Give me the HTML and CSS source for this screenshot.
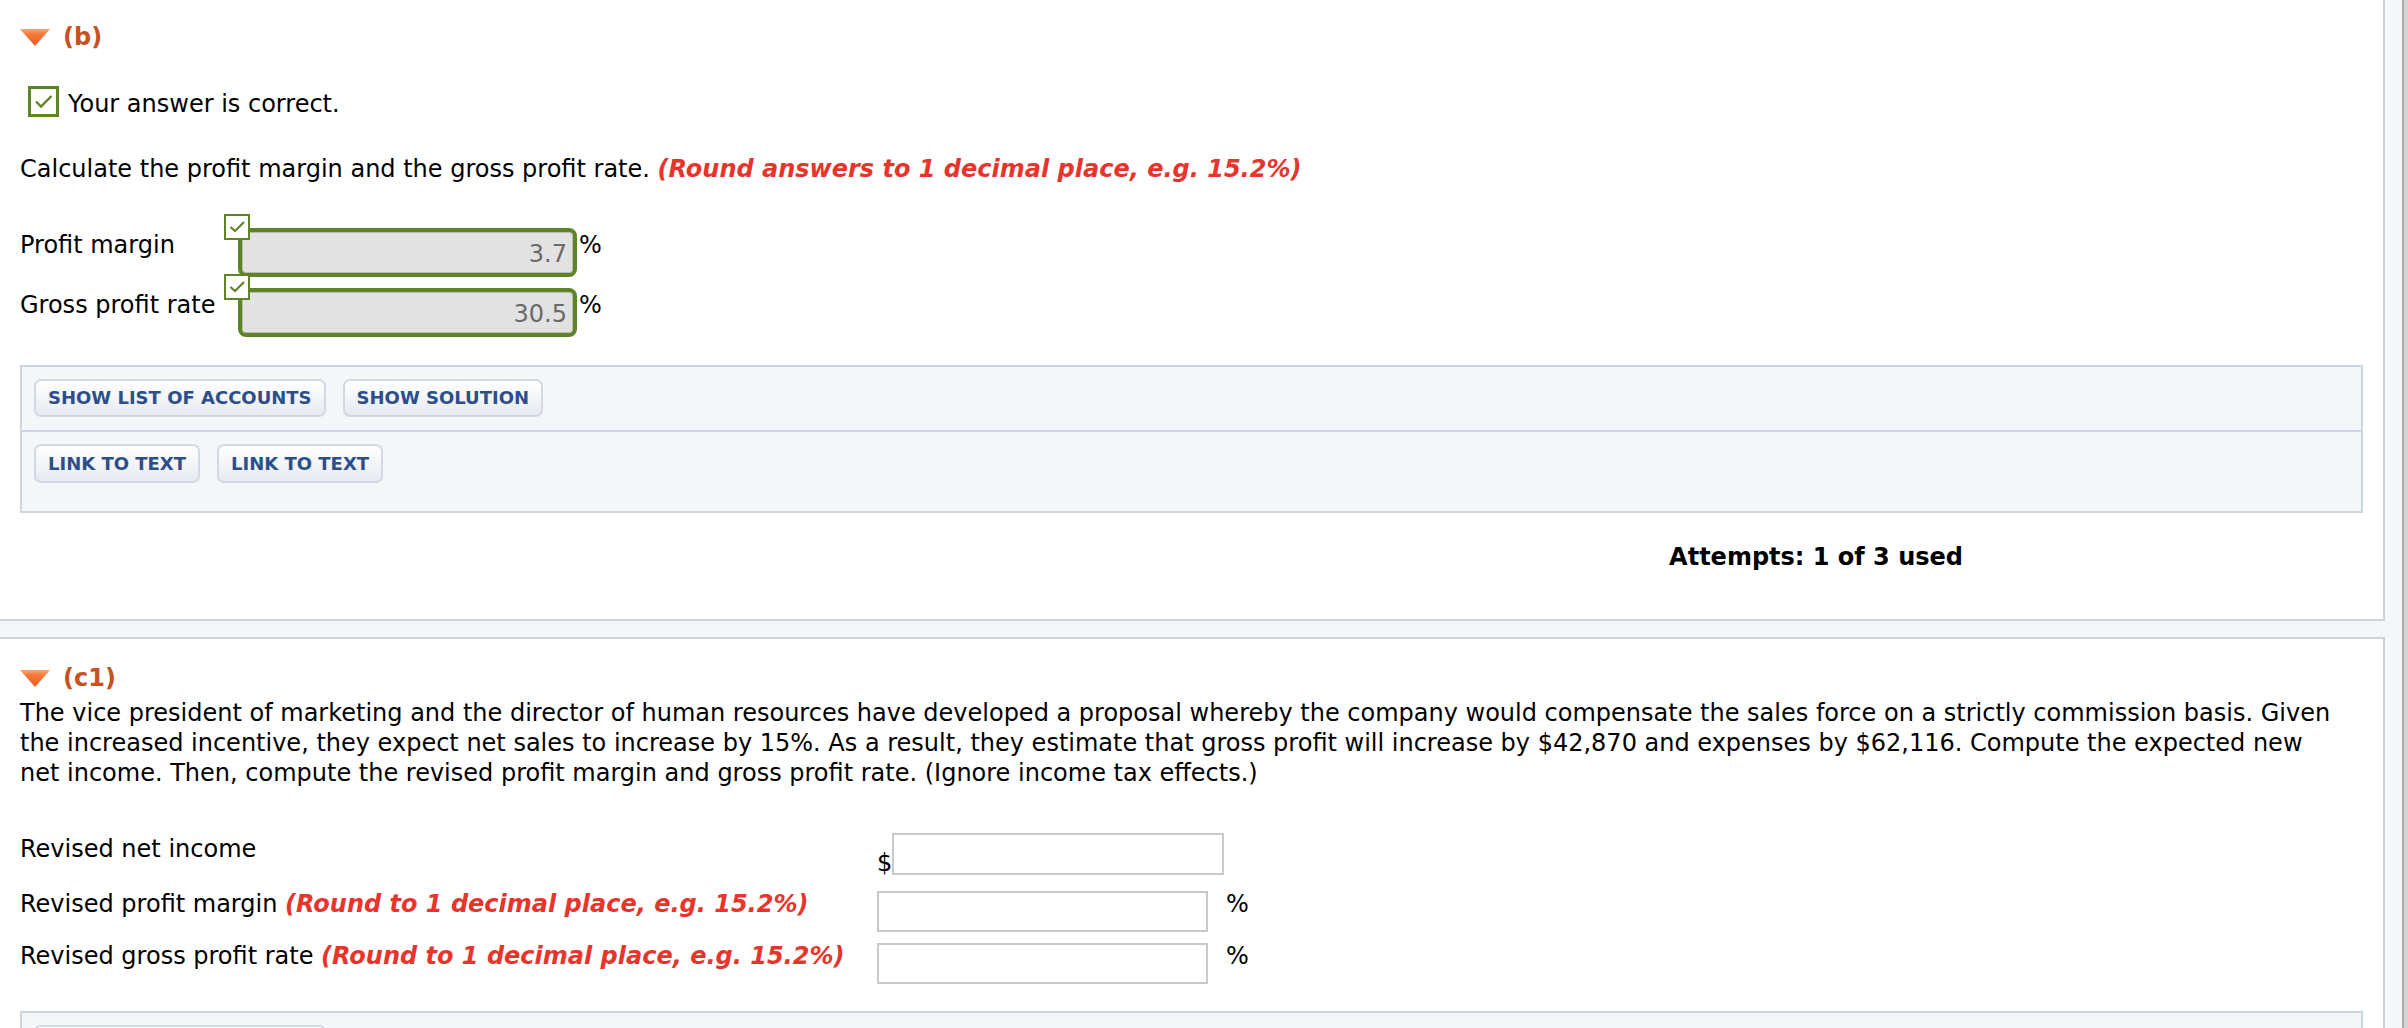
FILE: index.html
```html
<!DOCTYPE html>
<html lang="en">
<head>
<meta charset="utf-8">
<title>Question parts</title>
<link rel="stylesheet" href="styles.css">
</head>
<body>
<div class="page">
  <div class="content">
    <section class="part part-b">
      <h2 class="part-title">
        <svg class="caret" viewBox="0 0 30 17" width="30" height="17"><defs><linearGradient id="cg1" x1="0" y1="0" x2="0" y2="1"><stop offset="0" stop-color="#f9a872"/><stop offset="0.3" stop-color="#f47a3a"/><stop offset="1" stop-color="#f05a1e"/></linearGradient></defs><polygon points="0,0 30,0 15,17" fill="url(#cg1)"/></svg>
        <span>(b)</span>
      </h2>
      <div class="feedback">
        <span class="check-lg"><svg viewBox="0 0 25 25" width="25" height="25"><polyline points="5,12.5 10,17.5 20.5,7" fill="none" stroke="#5e8425" stroke-width="2.3"/></svg></span>
        <span class="feedback-text">Your answer is correct.</span>
      </div>
      <p class="prompt">Calculate the profit margin and the gross profit rate. <em class="hint">(Round answers to 1 decimal place, e.g. 15.2%)</em></p>
      <div class="answers">
        <div class="answer-row">
          <span class="answer-label">Profit margin</span>
          <span class="answer-field">
            <span class="check-sm"><svg viewBox="0 0 21 21" width="21" height="21"><polyline points="3.5,10 8,14 17,5" fill="none" stroke="#5e8425" stroke-width="2.1"/></svg></span>
            <span class="answer-value">3.7</span>
          </span>
          <span class="unit">%</span>
        </div>
        <div class="answer-row">
          <span class="answer-label">Gross profit rate</span>
          <span class="answer-field">
            <span class="check-sm"><svg viewBox="0 0 21 21" width="21" height="21"><polyline points="3.5,10 8,14 17,5" fill="none" stroke="#5e8425" stroke-width="2.1"/></svg></span>
            <span class="answer-value">30.5</span>
          </span>
          <span class="unit">%</span>
        </div>
      </div>
      <div class="tools">
        <div class="tools-row">
          <button class="tool-btn" type="button">SHOW LIST OF ACCOUNTS</button>
          <button class="tool-btn" type="button">SHOW SOLUTION</button>
        </div>
        <div class="tools-row tools-row-last">
          <button class="tool-btn" type="button">LINK TO TEXT</button>
          <button class="tool-btn" type="button">LINK TO TEXT</button>
        </div>
      </div>
      <div class="attempts">Attempts: 1 of 3 used</div>
    </section>

    <section class="part part-c">
      <h2 class="part-title">
        <svg class="caret" viewBox="0 0 30 17" width="30" height="17"><defs><linearGradient id="cg2" x1="0" y1="0" x2="0" y2="1"><stop offset="0" stop-color="#f9a872"/><stop offset="0.3" stop-color="#f47a3a"/><stop offset="1" stop-color="#f05a1e"/></linearGradient></defs><polygon points="0,0 30,0 15,17" fill="url(#cg2)"/></svg>
        <span>(c1)</span>
      </h2>
      <p class="question">The vice president of marketing and the director of human resources have developed a proposal whereby the company would compensate the sales force on a strictly commission basis. Given<br>the increased incentive, they expect net sales to increase by 15%. As a result, they estimate that gross profit will increase by $42,870 and expenses by $62,116. Compute the expected new<br>net income. Then, compute the revised profit margin and gross profit rate. (Ignore income tax effects.)</p>
      <div class="calc">
        <div class="calc-row calc-row-first">
          <span class="calc-label">Revised net income</span>
          <span class="currency">$</span>
          <input class="calc-input calc-input-money" type="text" aria-label="Revised net income">
        </div>
        <div class="calc-row calc-row-second">
          <span class="calc-label">Revised profit margin <em class="hint">(Round to 1 decimal place, e.g. 15.2%)</em></span>
          <input class="calc-input" type="text" aria-label="Revised profit margin">
          <span class="calc-unit">%</span>
        </div>
        <div class="calc-row calc-row-third">
          <span class="calc-label">Revised gross profit rate <em class="hint">(Round to 1 decimal place, e.g. 15.2%)</em></span>
          <input class="calc-input" type="text" aria-label="Revised gross profit rate">
          <span class="calc-unit">%</span>
        </div>
      </div>
      <div class="tools tools-c">
        <div class="tools-row tools-row-peek">
          <button class="tool-btn tool-btn-peek" type="button" aria-label="Show list of accounts"></button>
        </div>
      </div>
    </section>
  </div>
  <div class="scrolltrack"></div>
</div>
</body>
</html>
```

FILE: styles.css
```css
html, body {
  margin: 0;
  padding: 0;
  height: 1028px;
  overflow: hidden;
}

body {
  background: #f4f7fa;
  font-family: "DejaVu Sans", Verdana, sans-serif;
  font-size: 24px;
  line-height: 30px;
  color: #000;
}

.page {
  display: flex;
  height: 1028px;
  overflow: hidden;
}

.content {
  flex: 1;
  min-width: 0;
  height: 1028px;
  overflow: hidden;
}

.scrolltrack {
  width: 4px;
  flex: 0 0 4px;
  border-left: 2px solid #a9a9a9;
  background: #d4d4d4;
}

.part {
  background: #ffffff;
  border: 2px solid #cbd3dc;
  border-left: 0;
  margin-right: 17px;
  padding: 0 20px 0 20px;
}

.part-b {
  border-top: 0;
  padding-top: 22px;
  padding-bottom: 47px;
}

.part-c {
  margin-top: 16px;
  padding-top: 24px;
  border-bottom: 0;
  padding-bottom: 0;
}

.part-title {
  display: flex;
  align-items: center;
  gap: 13px;
  margin: 0;
  font-size: 24px;
  line-height: 30px;
  font-weight: bold;
  color: #c8511f;
}

.caret {
  display: block;
  flex: 0 0 30px;
}

.feedback {
  display: flex;
  align-items: center;
  margin-top: 34px;
  margin-left: 8px;
  height: 31px;
}

.check-lg {
  box-sizing: border-box;
  width: 31px;
  height: 31px;
  border: 3px solid #5e8425;
  background: #fff;
  display: flex;
  align-items: center;
  justify-content: center;
}

.check-lg svg {
  display: block;
}

.feedback-text {
  margin-left: 9px;
  padding-top: 4px;
}

.prompt {
  margin: 37px 0 0;
}

.hint {
  color: #e8342a;
  font-weight: bold;
  font-style: italic;
}

.answers {
  margin-top: 44px;
}

.answer-row {
  display: flex;
  align-items: flex-start;
}

.answer-row + .answer-row {
  margin-top: 11px;
}

.answer-label {
  width: 218px;
  flex: 0 0 218px;
  padding-top: 2px;
}

.answer-field {
  position: relative;
  box-sizing: border-box;
  width: 339px;
  height: 49px;
  border: 4px solid #5e8425;
  border-radius: 8px;
  background: #e2e2e2;
  box-shadow: inset 0 0 0 1px #b9b9b9;
  display: flex;
  align-items: center;
  justify-content: flex-end;
  padding-right: 6px;
}

.answer-value {
  color: #6a6a6a;
  padding-top: 2px;
}

.check-sm {
  position: absolute;
  left: -18px;
  top: -18px;
  box-sizing: border-box;
  width: 26px;
  height: 26px;
  border: 2.5px solid #5e8425;
  background: #fff;
  display: flex;
  align-items: center;
  justify-content: center;
}

.check-sm svg {
  display: block;
}

.unit {
  margin-left: 2px;
  padding-top: 2px;
}

.tools {
  margin-top: 28px;
  border: 2px solid #cdd5de;
  background: #f4f7fa;
}

.tools-row {
  display: flex;
  gap: 17px;
  padding: 12px 12px 13px;
  border-bottom: 2px solid #cdd5de;
}

.tools-row-last {
  border-bottom: 0;
  padding-bottom: 28px;
}

.tool-btn {
  box-sizing: border-box;
  height: 38px;
  padding: 0 12px;
  border: 2px solid #d2d9e2;
  border-radius: 7px;
  background: linear-gradient(#ffffff, #f3f5f8 50%, #e5e9ef);
  font-family: "DejaVu Sans", Verdana, sans-serif;
  font-size: 18px;
  font-weight: bold;
  color: #2c4f8c;
  line-height: 34px;
  cursor: pointer;
}

.tools-row-last .tool-btn {
  height: 39px;
}

.tool-btn-peek {
  width: 292px;
}

.tools-row-peek {
  border-bottom: 0;
}

.attempts {
  margin-top: 29px;
  display: flex;
  justify-content: flex-end;
  padding-right: 400px;
  font-weight: bold;
}

.question {
  margin: 5px 0 0;
}

.calc {
  margin-top: 45px;
}

.calc-row {
  display: flex;
  align-items: flex-start;
}

.calc-row-second {
  margin-top: 16px;
}

.calc-row-third {
  margin-top: 11px;
}

.calc-label {
  width: 857px;
  flex: 0 0 857px;
  margin-top: -2px;
}

.calc-row-first .calc-label {
  margin-top: 1px;
}

.currency {
  align-self: flex-end;
  width: 15px;
  margin-bottom: -3px;
}

.calc-input {
  box-sizing: border-box;
  width: 331px;
  height: 41px;
  margin: 0;
  border: 2px solid #c9c9c9;
  background: #fff;
  font-family: "DejaVu Sans", Verdana, sans-serif;
  font-size: 24px;
  padding: 0 6px;
  outline: none;
}

.calc-input-money {
  width: 332px;
  height: 42px;
}

.calc-unit {
  margin-left: 18px;
  margin-top: -2px;
}

.tools-c {
  margin-top: 27px;
}
```
